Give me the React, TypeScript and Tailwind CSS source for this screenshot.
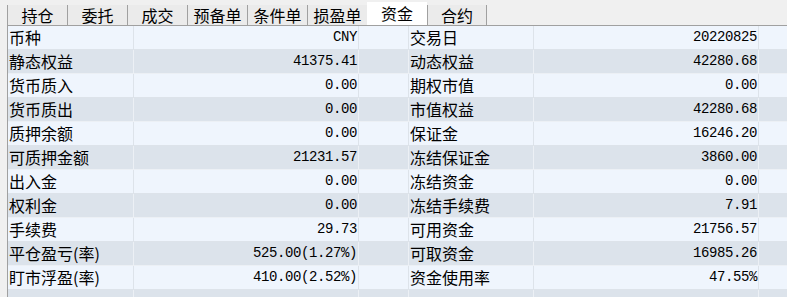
import React from "react";

const tabs = ["持仓", "委托", "成交", "预备单", "条件单", "损盈单", "资金", "合约"];

const left: [string, string][] = [
  ["币种", "CNY"],
  ["静态权益", "41375.41"],
  ["货币质入", "0.00"],
  ["货币质出", "0.00"],
  ["质押余额", "0.00"],
  ["可质押金额", "21231.57"],
  ["出入金", "0.00"],
  ["权利金", "0.00"],
  ["手续费", "29.73"],
  ["平仓盈亏(率)", "525.00(1.27%)"],
  ["盯市浮盈(率)", "410.00(2.52%)"],
  ["", ""],
];

const right: [string, string][] = [
  ["交易日", "20220825"],
  ["动态权益", "42280.68"],
  ["期权市值", "0.00"],
  ["市值权益", "42280.68"],
  ["保证金", "16246.20"],
  ["冻结保证金", "3860.00"],
  ["冻结资金", "0.00"],
  ["冻结手续费", "7.91"],
  ["可用资金", "21756.57"],
  ["可取资金", "16985.26"],
  ["资金使用率", "47.55%"],
  ["", ""],
];

const cjk = { fontFamily: '"Noto Sans CJK SC", "Noto Sans", sans-serif' };
const mono = { fontFamily: '"Liberation Mono", "DejaVu Sans Mono", monospace' };

export default function App() {
  return (
    <div className="w-[787px] h-[297px] overflow-hidden bg-[#f0f0f0] pl-[7px] text-black" style={cjk}>
      <div className="flex items-end h-[26px] border-b border-[#a0a0a0]">
        {tabs.map((t, i) =>
          t === "资金" ? (
            <div
              key={t}
              className="w-[60px] h-[23px] bg-white flex items-center justify-center text-[16px] leading-none pb-[1px]"
            >
              {t}
            </div>
          ) : (
            <div
              key={t}
              className={`w-[60px] h-[20px] bg-[#ebebeb] border-l border-[#a0a0a0] flex items-center justify-center text-[16px] leading-none ${
                i === tabs.length - 1 ? "border-r" : ""
              }`}
            >
              {t}
            </div>
          )
        )}
      </div>
      <div className="border-l border-[#a0a0a0]">
        {left.map((l, i) => {
          const r = right[i];
          const grey = i % 2 === 1;
          const bg = grey ? "bg-[#dce3eb]" : "bg-[#eff5fd]";
          const bd = grey ? "border-[#ecf0f5]" : "border-[#dde3ea]";
          return (
            <div
              key={i}
              className={`grid grid-cols-[126px_225px_50px_125px_225px_1fr] h-[24px] border-b ${bd} ${bg}`}
            >
              <div className={`border-r ${bd} pl-[1px] text-[16px] leading-[23px] whitespace-nowrap`}>{l[0]}</div>
              <div
                className={`border-r ${bd} pr-[1px] text-right text-[14px] tracking-[-0.4px] leading-[23px] whitespace-nowrap`}
                style={mono}
              >
                {l[1]}
              </div>
              <div className={`border-r ${bd}`} />
              <div className={`border-r ${bd} pl-[1px] text-[16px] leading-[23px] whitespace-nowrap`}>{r[0]}</div>
              <div
                className={`border-r ${bd} pr-[1px] text-right text-[14px] tracking-[-0.4px] leading-[23px] whitespace-nowrap`}
                style={mono}
              >
                {r[1]}
              </div>
              <div />
            </div>
          );
        })}
      </div>
    </div>
  );
}
